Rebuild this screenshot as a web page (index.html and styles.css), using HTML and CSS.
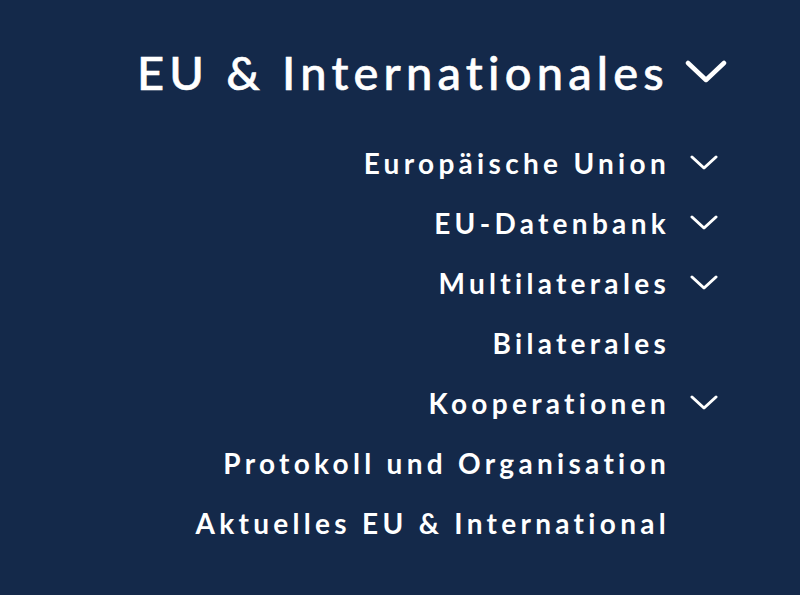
FILE: index.html
```html
<!DOCTYPE html>
<html lang="de">

<head>
    <meta charset="UTF-8">
    <meta name="viewport" content="width=device-width, initial-scale=1.0">
    <title>EU &amp; Internationales</title>
    <link rel="stylesheet" href="styles.css">
</head>

<body>
    <nav class="nav">
        <div class="nav-title">
            <span>EU &amp; Internationales</span>
            <svg class="chevron chevron-lg" viewBox="0 0 42 24" fill="none">
                <path d="M3 3 L21 20 L39 3" stroke="currentColor" stroke-width="4.5" stroke-linecap="round" stroke-linejoin="round" />
            </svg>
        </div>

        <ul class="nav-list">
            <li class="nav-item">
                <span>Europäische Union</span>
                <svg class="chevron" viewBox="0 0 28 16" fill="none">
                    <path d="M2 2 L14 13 L26 2" stroke="currentColor" stroke-width="3" stroke-linecap="round" stroke-linejoin="round" />
                </svg>
            </li>
            <li class="nav-item">
                <span>EU-Datenbank</span>
                <svg class="chevron" viewBox="0 0 28 16" fill="none">
                    <path d="M2 2 L14 13 L26 2" stroke="currentColor" stroke-width="3" stroke-linecap="round" stroke-linejoin="round" />
                </svg>
            </li>
            <li class="nav-item">
                <span>Multilaterales</span>
                <svg class="chevron" viewBox="0 0 28 16" fill="none">
                    <path d="M2 2 L14 13 L26 2" stroke="currentColor" stroke-width="3" stroke-linecap="round" stroke-linejoin="round" />
                </svg>
            </li>
            <li class="nav-item">
                <span>Bilaterales</span>
                <span class="chevron"></span>
            </li>
            <li class="nav-item">
                <span>Kooperationen</span>
                <svg class="chevron" viewBox="0 0 28 16" fill="none">
                    <path d="M2 2 L14 13 L26 2" stroke="currentColor" stroke-width="3" stroke-linecap="round" stroke-linejoin="round" />
                </svg>
            </li>
            <li class="nav-item">
                <span>Protokoll und Organisation</span>
                <span class="chevron"></span>
            </li>
            <li class="nav-item">
                <span>Aktuelles EU &amp; International</span>
                <span class="chevron"></span>
            </li>
        </ul>
    </nav>
</body>

</html>
```

FILE: styles.css
```css
html,
body {
    margin: 0;
    height: 100%;
}

body {
    background-color: #14294a;
    color: #ffffff;
    font-family: Lato, "Open Sans", sans-serif;
}

.nav {
    display: flex;
    flex-direction: column;
    align-items: flex-end;
    padding: 44px 82px 0 0;
}

.nav-title {
    display: flex;
    align-items: center;
    gap: 16px;
    margin-right: -9px;
    font-size: 47px;
    font-weight: 500;
    letter-spacing: 5.2px;
    line-height: 56px;
    -webkit-text-stroke: 0.6px #ffffff;
}

.chevron {
    display: block;
    width: 28px;
    height: 16px;
    flex-shrink: 0;
}

.chevron-lg {
    width: 42px;
    height: 24px;
}

.nav-list {
    list-style: none;
    margin: 33px 0 0;
    padding: 0;
    display: flex;
    flex-direction: column;
    align-items: flex-end;
}

.nav-item {
    display: flex;
    align-items: center;
    gap: 20px;
    height: 60px;
    font-size: 28px;
    font-weight: 700;
    letter-spacing: 4.3px;
}
```
